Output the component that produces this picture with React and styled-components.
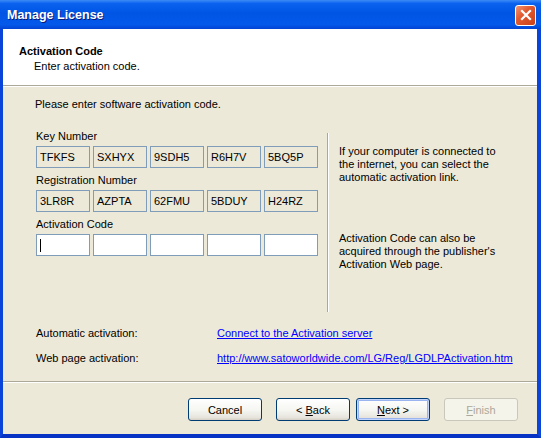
import React from "react";
import styled, { createGlobalStyle } from "styled-components";

const GlobalStyle = createGlobalStyle`
  html, body {
    margin: 0;
    padding: 0;
    background: #ffffff;
  }
  * {
    box-sizing: border-box;
  }
`;

const Window = styled.div`
  width: 541px;
  height: 438px;
  display: flex;
  flex-direction: column;
  font-family: "Liberation Sans", Arial, sans-serif;
  font-size: 11px;
  color: #000;
`;

const TitleBar = styled.div`
  height: 29px;
  flex: none;
  display: flex;
  align-items: center;
  justify-content: space-between;
  padding: 0 5px 0 7px;
  background: linear-gradient(
    180deg,
    #3d8cf6 0%,
    #0a62ee 12%,
    #0055e5 45%,
    #0459ea 85%,
    #0344d4 100%
  );
`;

const Caption = styled.span`
  font-family: "Liberation Sans", Arial, sans-serif;
  font-weight: bold;
  font-size: 12.5px;
  color: #fff;
  text-shadow: 1px 1px 0 #0a1a7a;
  margin-top: 1px;
`;

const CloseButton = styled.div`
  width: 21px;
  height: 21px;
  border: 1px solid #fff;
  border-radius: 3px;
  background: linear-gradient(135deg, #f39474 0%, #e25a30 40%, #c9401a 100%);
  display: flex;
  align-items: center;
  justify-content: center;
  margin-top: 1px;
`;

const Frame = styled.div`
  flex: 1;
  display: flex;
  flex-direction: column;
  border-left: 3px solid #0b44d8;
  border-right: 4px solid #0b44d8;
  border-bottom: 4px solid #0733c4;
`;

const Header = styled.div`
  height: 57px;
  flex: none;
  background: #fff;
  padding: 16px 0 0 16px;
  border-bottom: 1px solid #aca899;
`;

const HeaderTitle = styled.div`
  font-weight: bold;
  line-height: 13px;
`;

const HeaderSub = styled.div`
  line-height: 13px;
  margin-top: 2px;
  padding-left: 15px;
`;

const Body = styled.div`
  flex: 1;
  background: #ece9d8;
  border-top: 1px solid #fff;
  padding: 11px 0 0 32px;
  display: flex;
  flex-direction: column;
`;

const Text = styled.div`
  line-height: 13px;
`;

const Columns = styled.div`
  display: flex;
  margin-top: 19px;
  height: 182px;
`;

const LeftCol = styled.div`
  width: 283px;
  padding-left: 1px;
  display: flex;
  flex-direction: column;
  gap: 6px;
`;

const Group = styled.div`
  display: flex;
  flex-direction: column;
  gap: 3px;
`;

const FieldRow = styled.div`
  display: flex;
  gap: 3px;
`;

const Field = styled.div`
  width: 54px;
  height: 22px;
  border: 1px solid #7f9db9;
  background: ${(p) => (p.$editable ? "#ffffff" : "#ece9d8")};
  padding-left: 3px;
  line-height: 20px;
  display: flex;
  align-items: center;
`;

const Caret = styled.span`
  width: 1px;
  height: 13px;
  background: #000;
`;

const Divider = styled.div`
  width: 2px;
  margin: 3px 10px 0 9px;
  border-left: 1px solid #aca899;
  border-right: 1px solid #fff;
`;

const RightCol = styled.div`
  width: 170px;
  padding-top: 15px;
  display: flex;
  flex-direction: column;
  gap: 48px;
`;

const Links = styled.div`
  display: grid;
  grid-template-columns: 181px auto;
  row-gap: 12px;
  margin-top: 15px;
  padding-left: 1px;
`;

const Link = styled.a`
  color: #0000ff;
  text-decoration: underline;
  line-height: 13px;
  cursor: pointer;
`;

const Footer = styled.div`
  height: 53px;
  flex: none;
  background: #ece9d8;
  border-top: 1px solid #aca899;
  box-shadow: inset 0 1px 0 #fff;
  display: flex;
  justify-content: flex-end;
  align-items: flex-start;
  padding: 16px 19px 0 0;
`;

const Button = styled.button`
  width: 74px;
  height: 23px;
  margin-left: ${(p) => p.$gap || 0}px;
  font-family: "Liberation Sans", Arial, sans-serif;
  font-size: 11px;
  color: ${(p) => (p.disabled ? "#aca899" : "#000")};
  border: 1px solid ${(p) => (p.disabled ? "#c9c7ba" : "#003c74")};
  border-radius: 3px;
  padding: 0;
  background: ${(p) =>
    p.disabled
      ? "#f5f4ea"
      : "linear-gradient(180deg, #ffffff 0%, #f5f5f1 55%, #e6e4dc 88%, #d6d0c5 100%)"};
  box-shadow: ${(p) =>
    p.$default ? "inset 0 0 0 1px #c3d5fd, inset 0 0 0 2px #9ab4ef" : "none"};
`;

const KEY = ["TFKFS", "SXHYX", "9SDH5", "R6H7V", "5BQ5P"];
const REG = ["3LR8R", "AZPTA", "62FMU", "5BDUY", "H24RZ"];

export default function App() {
  return (
    <Window>
      <GlobalStyle />
      <TitleBar>
        <Caption>Manage License</Caption>
        <CloseButton>
          <svg width="12" height="12" viewBox="0 0 12 12">
            <path
              d="M2 2 L10 10 M10 2 L2 10"
              stroke="#fff"
              strokeWidth="2.2"
              strokeLinecap="square"
            />
          </svg>
        </CloseButton>
      </TitleBar>
      <Frame>
        <Header>
          <HeaderTitle>Activation Code</HeaderTitle>
          <HeaderSub>Enter activation code.</HeaderSub>
        </Header>
        <Body>
          <Text>Please enter software activation code.</Text>
          <Columns>
            <LeftCol>
              <Group>
                <Text>Key Number</Text>
                <FieldRow>
                  {KEY.map((v) => (
                    <Field key={v}>{v}</Field>
                  ))}
                </FieldRow>
              </Group>
              <Group>
                <Text>Registration Number</Text>
                <FieldRow>
                  {REG.map((v) => (
                    <Field key={v}>{v}</Field>
                  ))}
                </FieldRow>
              </Group>
              <Group>
                <Text>Activation Code</Text>
                <FieldRow>
                  {[0, 1, 2, 3, 4].map((i) => (
                    <Field key={i} $editable>
                      {i === 0 && <Caret />}
                    </Field>
                  ))}
                </FieldRow>
              </Group>
            </LeftCol>
            <Divider />
            <RightCol>
              <Text>
                If your computer is connected to
                <br />
                the internet, you can select the
                <br />
                automatic activation link.
              </Text>
              <Text>
                Activation Code can also be
                <br />
                acquired through the publisher's
                <br />
                Activation Web page.
              </Text>
            </RightCol>
          </Columns>
          <Links>
            <Text>Automatic activation:</Text>
            <Link>Connect to the Activation server</Link>
            <Text>Web page activation:</Text>
            <Link>http://www.satoworldwide.com/LG/Reg/LGDLPActivation.htm</Link>
          </Links>
        </Body>
        <Footer>
          <Button>Cancel</Button>
          <Button $gap={14}>
            &lt; <u>B</u>ack
          </Button>
          <Button $gap={6} $default>
            <u>N</u>ext &gt;
          </Button>
          <Button $gap={14} disabled>
            <u>F</u>inish
          </Button>
        </Footer>
      </Frame>
    </Window>
  );
}
